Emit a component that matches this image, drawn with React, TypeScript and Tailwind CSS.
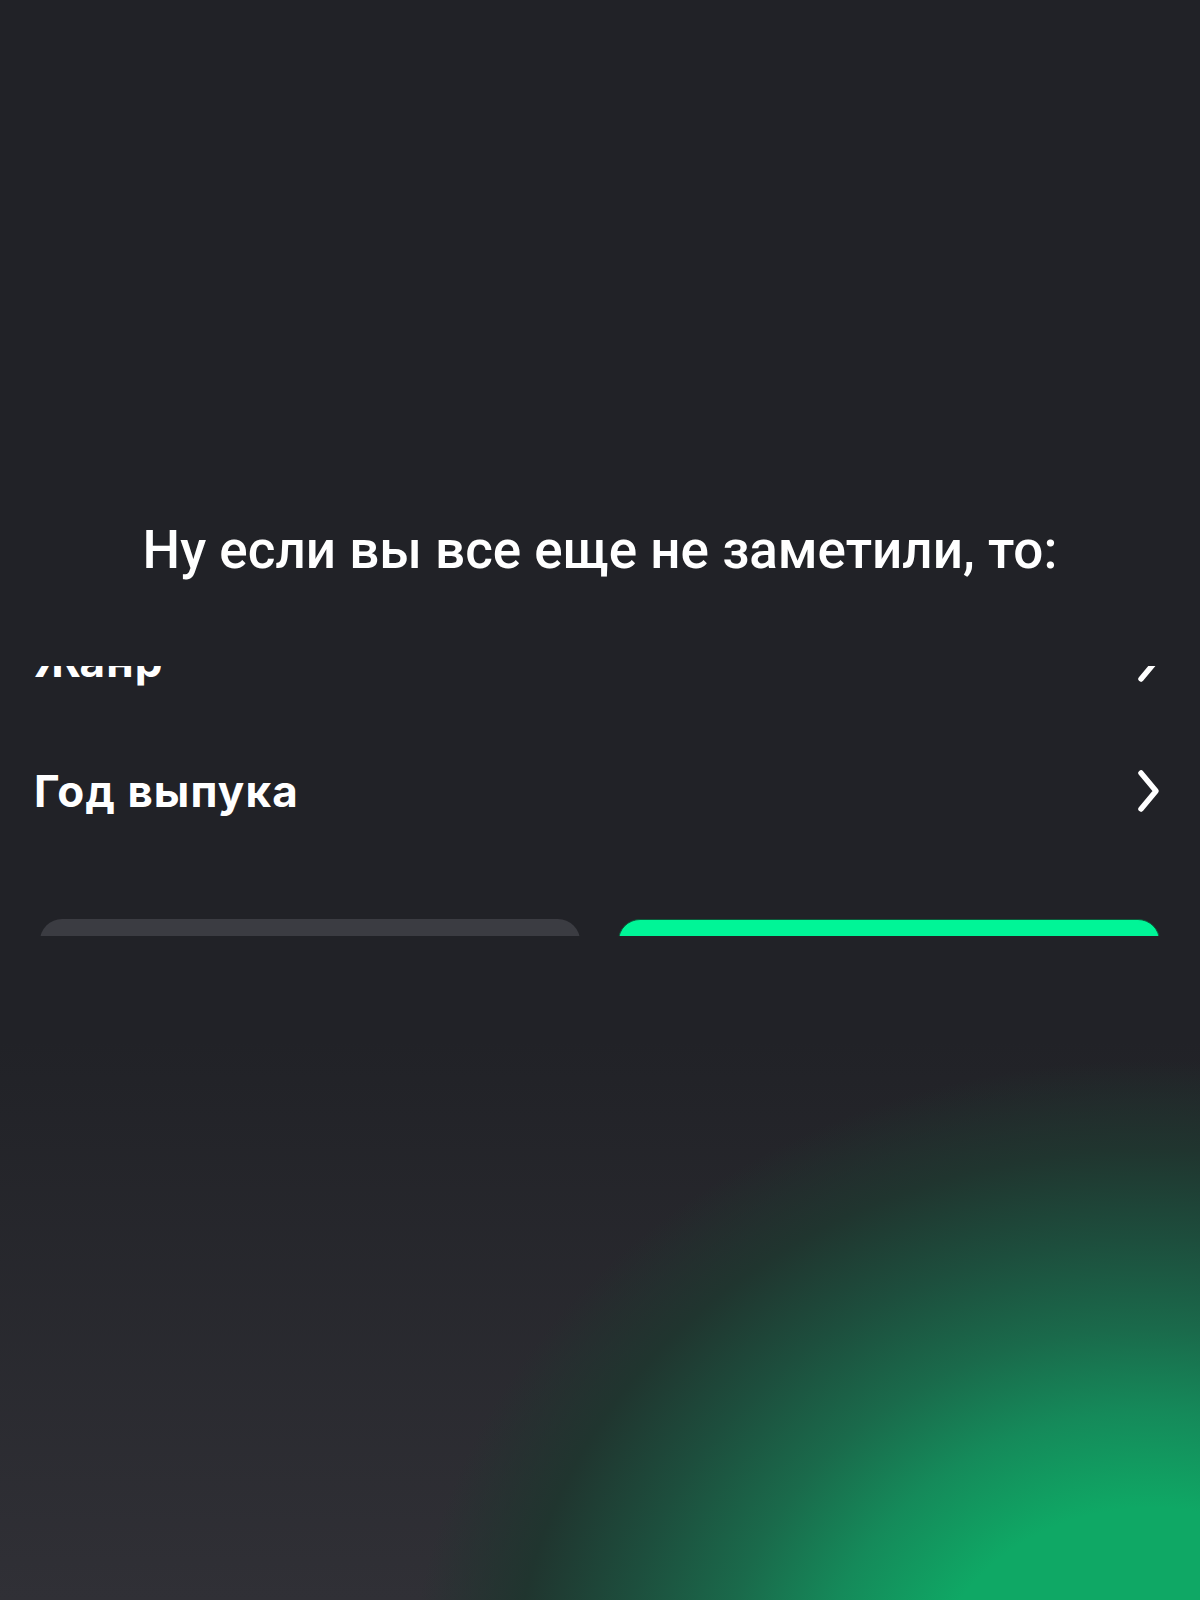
import * as React from 'react';

function Chevron() {
  return (
    <svg width="28" height="46" viewBox="0 0 28 46" fill="none" className="shrink-0">
      <polyline
        points="7,5 22,23 7,41"
        stroke="#ffffff"
        strokeWidth="5.5"
        strokeLinecap="round"
        strokeLinejoin="round"
      />
    </svg>
  );
}

function FilterRow({ label }: { label: string }) {
  return (
    <div className="flex h-[130px] items-center justify-between pl-[34px] pr-[38px]">
      <span className="font-['Inter',sans-serif] text-[44px] font-bold tracking-[0.025em] text-white">{label}</span>
      <Chevron />
    </div>
  );
}

export default function App() {
  return (
    <div className="flex h-[1600px] w-full flex-col overflow-hidden bg-[#212227] bg-[radial-gradient(ellipse_740px_640px_at_1150px_1700px,#0fa865_0%,#0fa865_30%,#158a5a_45%,#1a6a4b_58%,#1d4e3d_72%,#20352f_86%,rgba(33,34,39,0)_100%),linear-gradient(to_top,#303036_0%,rgba(33,34,39,0)_35%)]">
      <div className="pt-[518px] text-center font-['Roboto',sans-serif] text-[53px] font-medium leading-[64px] text-white">
        Ну если вы все еще не заметили, то:
      </div>

      {/* clipped piece of the filter sheet */}
      <div className="mt-[84px] h-[270px] overflow-hidden">
        <div className="-mt-[70px]">
          <FilterRow label="Жанр" />
          <FilterRow label="Год выпука" />
          <div className="mt-[63px] flex gap-[38px] px-[40px]">
            <div className="h-[56px] flex-1 rounded-t-[22px] bg-[#3b3c42]" />
            <div className="h-[56px] flex-1 rounded-t-[22px] border border-[#0b5a3a] bg-[#00f597]" />
          </div>
        </div>
      </div>
    </div>
  );
}
